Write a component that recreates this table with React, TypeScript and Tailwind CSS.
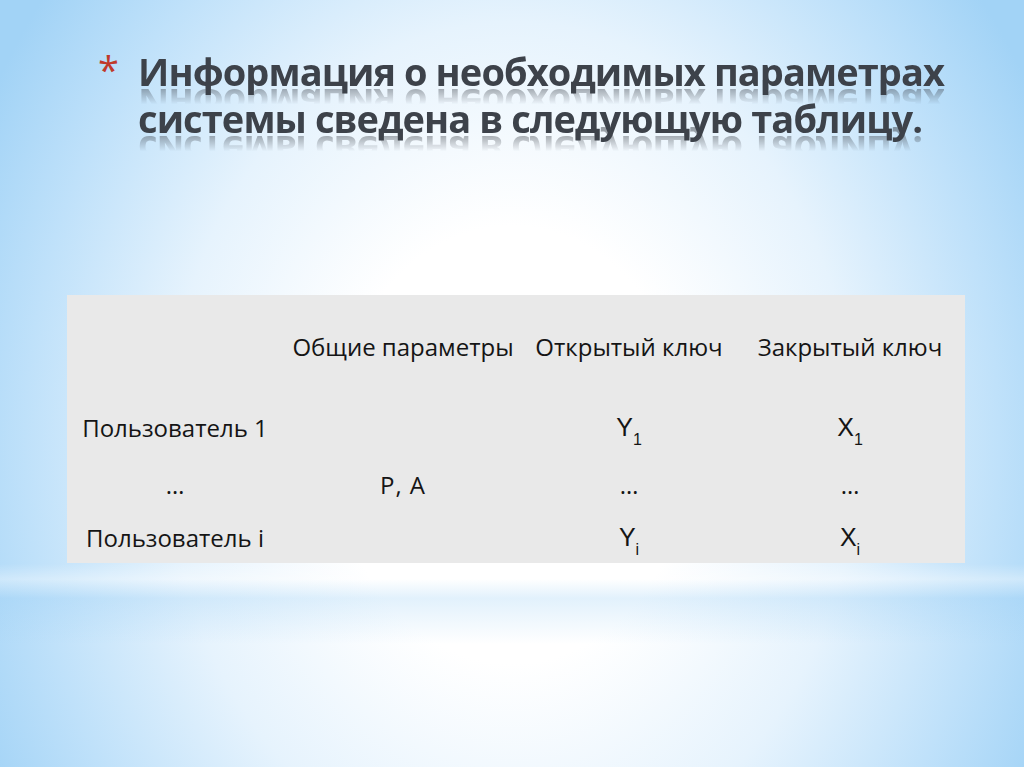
import React from "react";

const lineCls =
  "block whitespace-nowrap [-webkit-box-reflect:below_-15px_linear-gradient(to_bottom,transparent_48%,rgba(255,255,255,0.45)_84%,rgba(255,255,255,0.5)_100%)]";

function Sub({ base, sub }: { base: string; sub: string }) {
  return (
    <span className="font-['Liberation_Sans',Arial,sans-serif] text-[25px]">
      {base}
      <sub className="text-[16px] align-[-5px]">{sub}</sub>
    </span>
  );
}

type Row = { c1: React.ReactNode; c2: React.ReactNode; c3: React.ReactNode; c4: React.ReactNode; h: string };

export default function App() {
  const rows: Row[] = [
    { c1: "Пользователь 1", c2: "", c3: <Sub base="Y" sub="1" />, c4: <Sub base="X" sub="1" />, h: "h-[57px]" },
    { c1: "…", c2: <span className="tracking-[1px]">P, A</span>, c3: "…", c4: "…", h: "h-[57px]" },
    { c1: "Пользователь i", c2: "", c3: <Sub base="Y" sub="i" />, c4: <Sub base="X" sub="i" />, h: "h-[50px]" },
  ];
  return (
    <div className="relative w-[1024px] h-[767px] overflow-hidden bg-[linear-gradient(to_bottom,transparent_0%,transparent_73.5%,rgba(255,255,255,0.35)_75.5%,rgba(150,205,245,0.28)_78%,rgba(255,255,255,0)_84%,transparent_100%),radial-gradient(ellipse_58%_95%_at_50%_58%,#ffffff_0%,#ffffff_30%,#e6f3fd_58%,#bfe1fa_82%,#a2d3f6_100%)]">
      <div className="flex pl-[98px] pt-[48px] h-[295px]">
        <span className="shrink-0 w-[40px] text-[#c0392b] text-[38px] leading-none font-['Open_Sans',sans-serif] mt-[2px]">
          *
        </span>
        <div className="font-['Open_Sans',sans-serif] font-bold text-[38px] leading-[47px] text-[#3d424a] tracking-[-0.9px]">
          <span className={lineCls}>Информация о необходимых параметрах</span>
          <span className={lineCls}>системы сведена в следующую таблицу.</span>
        </div>
      </div>
      <div className="ml-[67px] w-[898px] bg-[#e9e9e9] font-['Open_Sans',sans-serif] text-[24px] text-[#151515]">
        <div className="flex h-[104px] items-center">
          <div className="w-[216px]" />
          <div className="w-[240px] text-center">Общие параметры</div>
          <div className="w-[212px] text-center">Открытый ключ</div>
          <div className="w-[230px] text-center">Закрытый ключ</div>
        </div>
        {rows.map((r, i) => (
          <div key={i} className={`flex items-center ${r.h}`}>
            <div className="w-[216px] text-center">{r.c1}</div>
            <div className="w-[240px] text-center">{r.c2}</div>
            <div className="w-[212px] text-center">{r.c3}</div>
            <div className="w-[230px] text-center">{r.c4}</div>
          </div>
        ))}
      </div>
    </div>
  );
}
